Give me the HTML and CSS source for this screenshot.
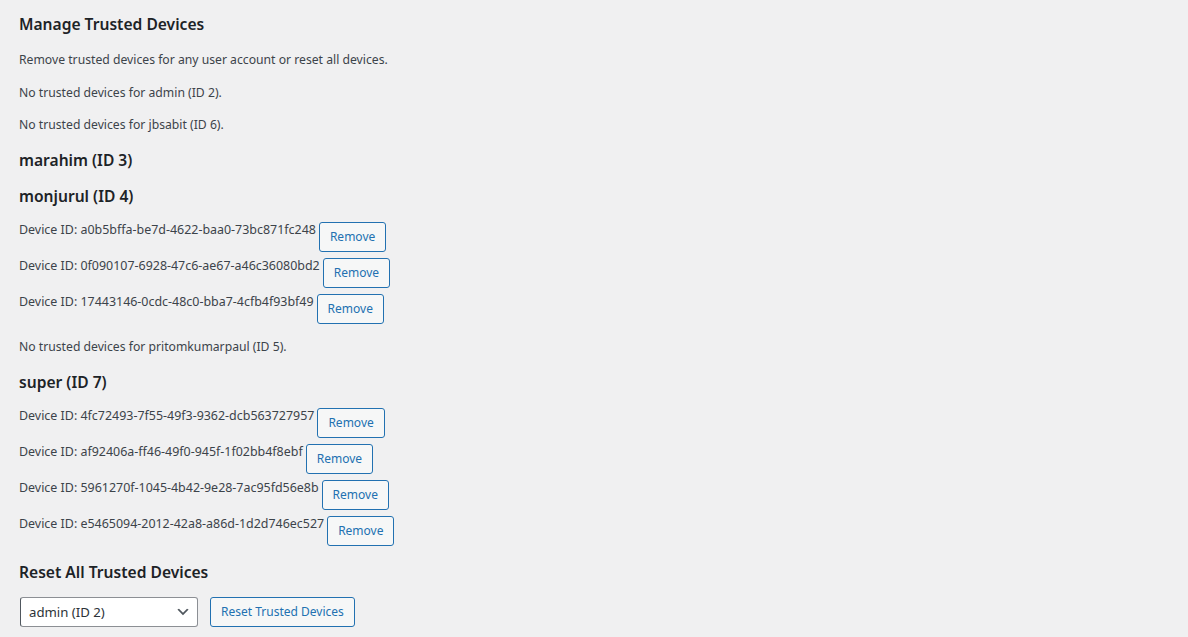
FILE: index.html
```html
<!DOCTYPE html>
<html lang="en">
<head>
<meta charset="utf-8">
<title>Manage Trusted Devices</title>
<link rel="stylesheet" href="styles.css">
</head>
<body>
<div class="wrap">
  <h2 class="title">Manage Trusted Devices</h2>
  <p>Remove trusted devices for any user account or reset all devices.</p>
  <p>No trusted devices for admin (ID 2).</p>
  <p>No trusted devices for jbsabit (ID 6).</p>

  <h3 class="user">marahim (ID 3)</h3>
  <h3 class="user">monjurul (ID 4)</h3>
  <div class="device"><span class="device-id">Device ID: a0b5bffa-be7d-4622-baa0-73bc871fc248</span><button class="button">Remove</button></div>
  <div class="device"><span class="device-id">Device ID: 0f090107-6928-47c6-ae67-a46c36080bd2</span><button class="button">Remove</button></div>
  <div class="device"><span class="device-id">Device ID: 17443146-0cdc-48c0-bba7-4cfb4f93bf49</span><button class="button">Remove</button></div>
  <p>No trusted devices for pritomkumarpaul (ID 5).</p>

  <h3 class="user">super (ID 7)</h3>
  <div class="device"><span class="device-id">Device ID: 4fc72493-7f55-49f3-9362-dcb563727957</span><button class="button">Remove</button></div>
  <div class="device"><span class="device-id">Device ID: af92406a-ff46-49f0-945f-1f02bb4f8ebf</span><button class="button">Remove</button></div>
  <div class="device"><span class="device-id">Device ID: 5961270f-1045-4b42-9e28-7ac95fd56e8b</span><button class="button">Remove</button></div>
  <div class="device"><span class="device-id">Device ID: e5465094-2012-42a8-a86d-1d2d746ec527</span><button class="button">Remove</button></div>

  <h3 class="user last">Reset All Trusted Devices</h3>
  <form class="reset-form">
    <div class="select-wrap">
      <select class="user-select">
        <option>admin (ID 2)</option>
        <option>marahim (ID 3)</option>
        <option>monjurul (ID 4)</option>
        <option>pritomkumarpaul (ID 5)</option>
        <option>jbsabit (ID 6)</option>
        <option>super (ID 7)</option>
      </select>
      <svg class="chevron" width="16" height="16" viewBox="0 0 20 20" aria-hidden="true"><path d="M5 6l5 5 5-5 2 1-7 7-7-7 2-1z" fill="#50575e"/></svg>
    </div>
    <button type="button" class="button">Reset Trusted Devices</button>
  </form>
</div>
</body>
</html>
```

FILE: styles.css
```css
html, body {
  margin: 0;
  padding: 0;
  background: #f0f0f1;
}

body {
  font-family: "Noto Sans", "Open Sans", sans-serif;
  font-size: 12.2px;
  line-height: 18.2px;
  color: #3c434a;
  height: 637px;
  overflow: hidden;
}

.wrap {
  padding: 15px 20px 0 19px;
}

.title,
.user {
  font-size: 15.6px;
  font-weight: 600;
  color: #1d2327;
  line-height: 18.2px;
  margin: 16.9px 0;
}

.title {
  margin-top: 0;
}

.user.last {
  margin-bottom: 15.9px;
}

p {
  font-size: 12.2px;
  line-height: 19.5px;
  margin: 13px 0;
}

.device {
  display: flex;
  align-items: flex-start;
  margin: 6px 0;
}

.device-id {
  font-size: 12.45px;
  line-height: 16px;
  margin-right: 3px;
}

.button {
  font-family: inherit;
  font-size: 12px;
  line-height: 28px;
  min-height: 30px;
  margin: 0;
  padding: 0 10px;
  color: #2271b1;
  border: 1px solid #2271b1;
  border-radius: 3px;
  background: #f6f7f7;
  cursor: pointer;
  box-sizing: border-box;
  white-space: nowrap;
}

.reset-form {
  display: flex;
  align-items: center;
  gap: 12px;
  margin-left: 1px;
}

.select-wrap {
  position: relative;
  width: 178px;
  height: 30px;
}

.user-select {
  appearance: none;
  -webkit-appearance: none;
  width: 100%;
  height: 30px;
  margin: 0;
  padding: 0 24px 0 8px;
  font-family: inherit;
  font-size: 13.2px;
  color: #2c3338;
  background: #fff;
  border: 1px solid #8c8f94;
  border-left-color: #50575e;
  border-radius: 3px;
  box-sizing: border-box;
}

.chevron {
  position: absolute;
  right: 7px;
  top: 7px;
  pointer-events: none;
}
```
